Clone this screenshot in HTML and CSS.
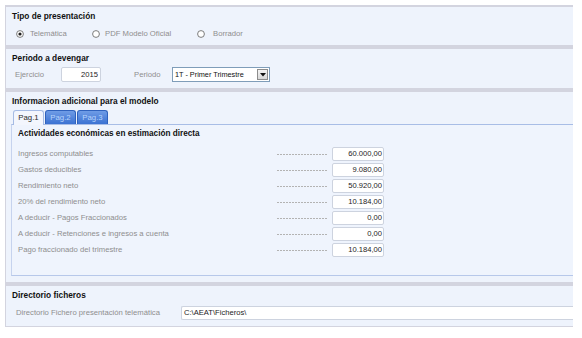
FILE: index.html
```html
<!DOCTYPE html>
<html lang="es">
<head>
<meta charset="utf-8">
<title>Modelo</title>
<link rel="stylesheet" href="styles.css">
</head>
<body>
<div class="form">
  <section class="panel p-tipo">
    <h2 class="title">Tipo de presentación</h2>
    <div class="radios">
      <label class="radio r1"><svg class="rd" width="8" height="8" viewBox="0 0 8 8"><circle cx="4" cy="4" r="3.4" fill="#fff" stroke="#6e6e6e" stroke-width="0.9"/><circle cx="4" cy="4" r="1.6" fill="#1e1e1e"/></svg>Telemática</label>
      <label class="radio r2"><svg class="rd" width="8" height="8" viewBox="0 0 8 8"><circle cx="4" cy="4" r="3.4" fill="#fff" stroke="#6e6e6e" stroke-width="0.9"/></svg>PDF Modelo Oficial</label>
      <label class="radio r3"><svg class="rd" width="8" height="8" viewBox="0 0 8 8"><circle cx="4" cy="4" r="3.4" fill="#fff" stroke="#6e6e6e" stroke-width="0.9"/></svg>Borrador</label>
    </div>
  </section>

  <section class="panel p-periodo">
    <h2 class="title">Periodo a devengar</h2>
    <div class="row-periodo">
      <span class="lbl lbl-ej">Ejercicio</span>
      <span class="box box-ej">2015</span>
      <span class="lbl lbl-per">Periodo</span>
      <span class="select"><span class="sel-text">1T - Primer Trimestre</span><span class="sel-btn"><svg width="6" height="4" viewBox="0 0 6 4"><path d="M0 0H6L3 3.5Z" fill="#111"/></svg></span></span>
    </div>
  </section>

  <section class="panel p-info">
    <h2 class="title">Informacion adicional para el modelo</h2>
    <div class="tabs">
      <span class="tab active">Pag.1</span>
      <span class="tab">Pag.2</span>
      <span class="tab">Pag.3</span>
    </div>
    <div class="tabbox">
      <h3 class="subtitle">Actividades económicas en estimación directa</h3>
      <div class="rows">
        <div class="row"><span class="lbl">Ingresos computables</span><span class="dashes"></span><span class="box num">60.000,00</span></div>
        <div class="row"><span class="lbl">Gastos deducibles</span><span class="dashes"></span><span class="box num">9.080,00</span></div>
        <div class="row"><span class="lbl">Rendimiento neto</span><span class="dashes"></span><span class="box num">50.920,00</span></div>
        <div class="row"><span class="lbl">20% del rendimiento neto</span><span class="dashes"></span><span class="box num">10.184,00</span></div>
        <div class="row"><span class="lbl">A deducir - Pagos Fraccionados</span><span class="dashes"></span><span class="box num">0,00</span></div>
        <div class="row"><span class="lbl">A deducir - Retenciones e ingresos a cuenta</span><span class="dashes"></span><span class="box num">0,00</span></div>
        <div class="row"><span class="lbl">Pago fraccionado del trimestre</span><span class="dashes"></span><span class="box num">10.184,00</span></div>
      </div>
    </div>
  </section>

  <section class="panel p-dir">
    <h2 class="title">Directorio ficheros</h2>
    <div class="row-dir">
      <span class="lbl lbl-dir">Directorio Fichero presentación telemática</span>
      <span class="box box-dir">C:\AEAT\Ficheros\</span>
    </div>
  </section>
</div>
</body>
</html>
```

FILE: styles.css
```css
* { box-sizing: border-box; margin: 0; padding: 0; }

html, body { background: #ffffff; }

body {
  font-family: "Liberation Sans", Arial, sans-serif;
  font-size: 7.7px;
  color: #8e8e8e;
}

.form {
  margin: 5px 9px 0 5px;
  width: 568px;
  background: #d3d4df;
  padding: 2px 0 1px 1px;
  display: flex;
  flex-direction: column;
  gap: 4px;
}

.panel {
  background: #eef3fc;
  padding: 3px 0 0 6px;
}

.title {
  font-size: 8.3px;
  font-weight: bold;
  color: #111;
  line-height: 12px;
  height: 12px;
}

/* Tipo de presentación */
.p-tipo { padding-bottom: 5px; }
.radios {
  display: flex;
  margin-top: 6px;
  height: 12px;
  align-items: center;
  padding-left: 4px;
}
.radio {
  display: flex;
  align-items: center;
  line-height: 12px;
  white-space: nowrap;
}
.rd { margin-right: 6px; flex: none; }
.r1 { width: 76px; }
.r2 { width: 105px; }
.r2 .rd { margin-right: 5px; }
.r3 .rd { margin-right: 8px; }

/* Periodo */
.p-periodo { padding-bottom: 6px; }
.row-periodo {
  display: flex;
  align-items: center;
  margin-top: 3px;
  height: 15px;
  padding-left: 3px;
}
.lbl { line-height: 12px; white-space: nowrap; }
.lbl-ej { width: 46px; }
.lbl-per { width: 38px; margin-left: 33px; }

.box {
  background: #ffffff;
  border: 1px solid #cdd3df;
  border-radius: 2px;
  color: #1c1c1c;
  font-size: 7.6px;
  line-height: 12px;
  white-space: nowrap;
}
.box-ej {
  width: 40px;
  height: 15px;
  text-align: right;
  padding: 1px 2px 0 0;
}

.select {
  width: 98px;
  height: 15px;
  background: #ffffff;
  border: 1px solid #7f9db9;
  display: flex;
  align-items: center;
  justify-content: space-between;
  padding: 0 1px 0 2px;
  color: #111;
  font-size: 7.3px;
}
.sel-text { line-height: 12px; white-space: nowrap; }
.sel-btn {
  width: 11px;
  height: 11px;
  background: linear-gradient(#f4f4f4, #d8d8d8);
  border: 1px solid #8c8c8c;
  display: flex;
  align-items: center;
  justify-content: center;
}

/* Info adicional */
.p-info { padding: 3px 0 6px 5px; }
.p-info .title { margin-left: 1px; }
.tabs {
  display: flex;
  gap: 1px;
  margin-top: 3px;
  height: 14px;
  padding-left: 2px;
}
.tab {
  width: 31px;
  height: 14px;
  border-radius: 3px 3px 0 0;
  background: linear-gradient(#6f9ce6, #3b72d2);
  border: 1px solid #2f62bd;
  border-bottom: none;
  color: #b7d3fb;
  text-align: center;
  line-height: 13px;
  font-size: 7.8px;
}
.tab.active {
  background: #f3f6fd;
  border-color: #a5bbe4;
  color: #2a2a2a;
  height: 15px;
  position: relative;
  z-index: 1;
}

.tabbox {
  height: 152px;
  border-top: 1px solid #a8bde6;
  border-left: 1px solid #c6d3ee;
  border-bottom: 1px solid #b7c8ea;
  padding: 3px 0 0 6px;
  background: #eff4fd;
}
.subtitle {
  font-size: 8.2px;
  font-weight: bold;
  color: #111;
  line-height: 12px;
  height: 12px;
}
.rows {
  margin-top: 6px;
  display: flex;
  flex-direction: column;
}
.row {
  display: flex;
  align-items: center;
  height: 16px;
}
.row .lbl { width: 259px; }
.dashes {
  width: 51px;
  height: 1px;
  margin-top: 1px;
  background: repeating-linear-gradient(90deg, #b3b3b3 0 2px, transparent 2px 3px);
}
.num {
  margin-left: 4px;
  width: 52px;
  height: 14px;
  text-align: right;
  padding: 0 1px 0 0;
  line-height: 12px;
}

/* Directorio */
.p-dir { padding-bottom: 6px; }
.row-dir {
  display: flex;
  align-items: center;
  margin-top: 5px;
  height: 14px;
  padding-left: 4px;
}
.lbl-dir { width: 165px; }
.box-dir {
  flex: 1;
  height: 14px;
  border-right: none;
  border-radius: 2px 0 0 2px;
  padding-left: 2px;
}
```
